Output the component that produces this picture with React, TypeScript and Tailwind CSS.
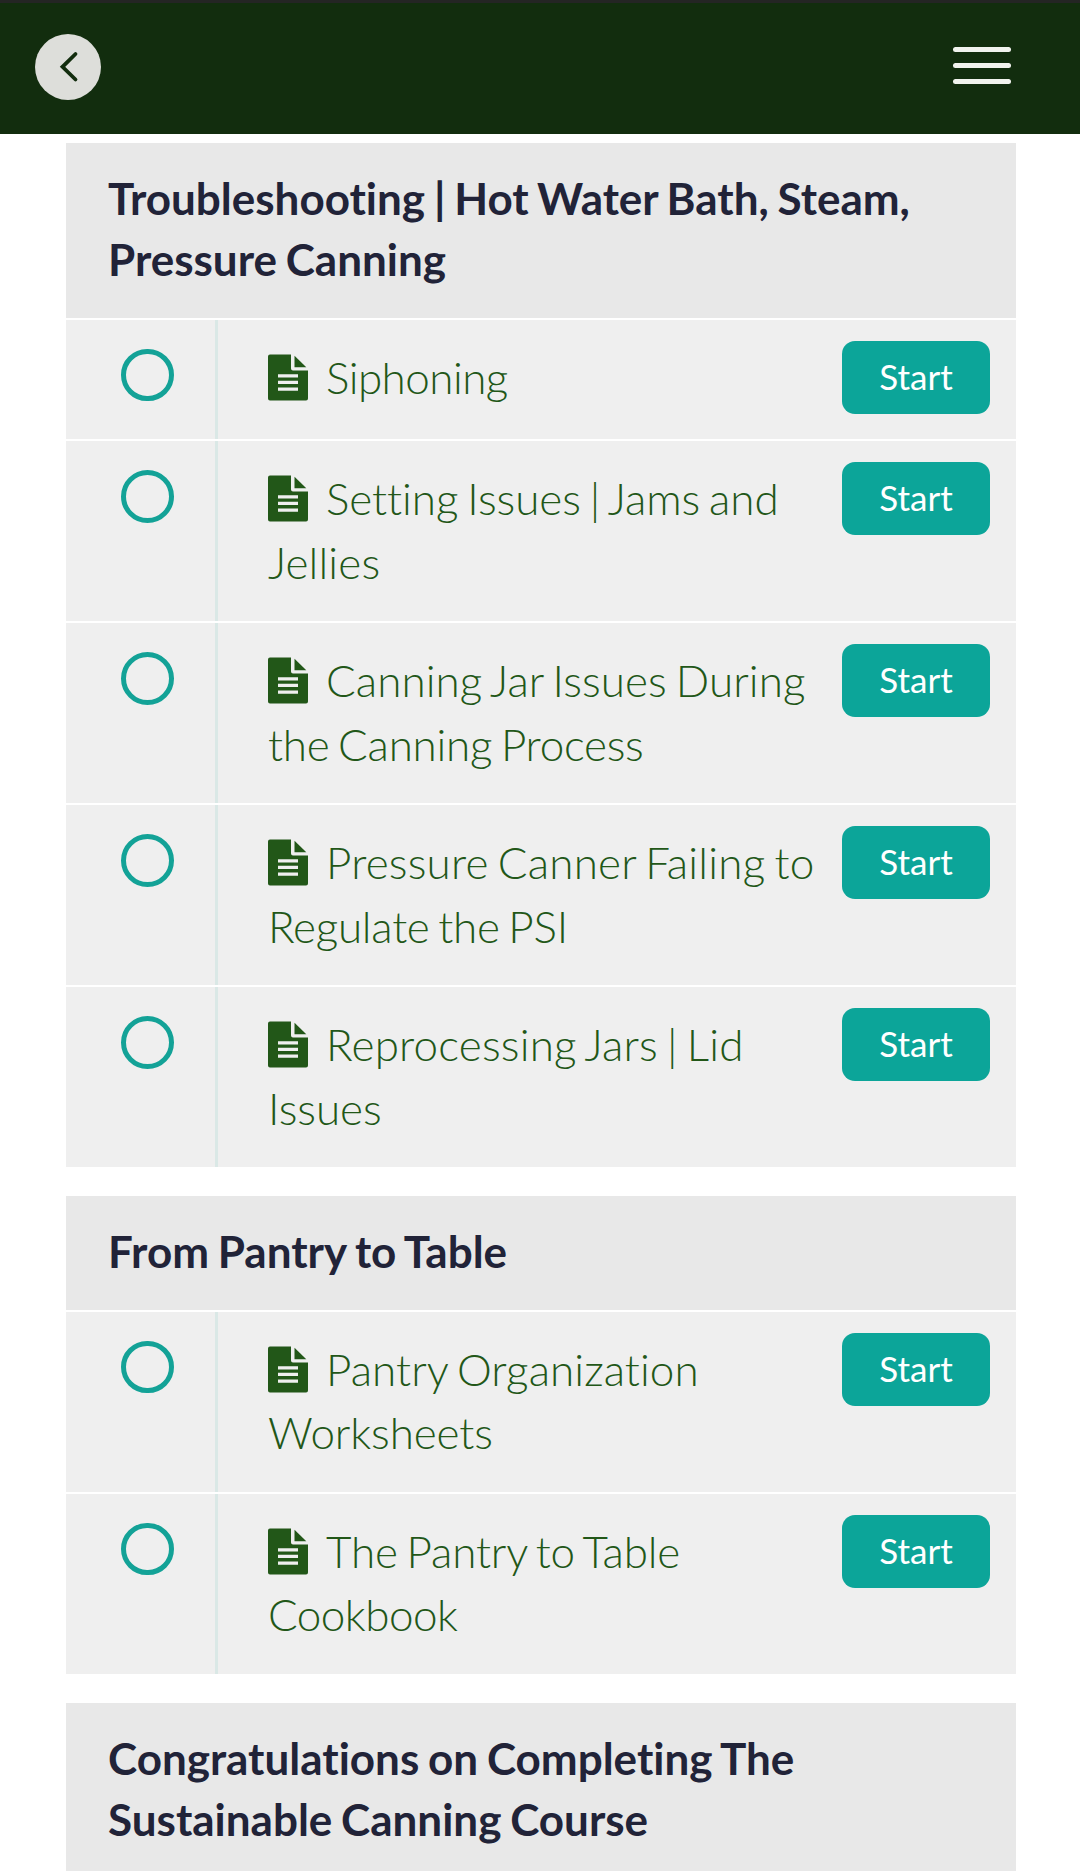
type Line = {
  text: string
  tracking: string
}

type Section = {
  title: string[]
  lessons: Line[][]
}

const sections: Section[] = [
  {
    title: ['Troubleshooting | Hot Water Bath, Steam,', 'Pressure Canning'],
    lessons: [
      [{ text: 'Siphoning', tracking: 'tracking-[-0.55px]' }],
      [
        { text: 'Setting Issues | Jams and', tracking: 'tracking-[-0.06px]' },
        { text: 'Jellies', tracking: 'tracking-[0.15px]' },
      ],
      [
        { text: 'Canning Jar Issues During', tracking: 'tracking-[0.07px]' },
        { text: 'the Canning Process', tracking: 'tracking-[-0.26px]' },
      ],
      [
        { text: 'Pressure Canner Failing to', tracking: 'tracking-[0.2px]' },
        { text: 'Regulate the PSI', tracking: 'tracking-[-0.26px]' },
      ],
      [
        { text: 'Reprocessing Jars | Lid', tracking: 'tracking-[0.18px]' },
        { text: 'Issues', tracking: 'tracking-[-0.05px]' },
      ],
    ],
  },
  {
    title: ['From Pantry to Table'],
    lessons: [
      [
        { text: 'Pantry Organization', tracking: 'tracking-[0.07px]' },
        { text: 'Worksheets', tracking: 'tracking-[-0.13px]' },
      ],
      [
        { text: 'The Pantry to Table', tracking: 'tracking-[-0.17px]' },
        { text: 'Cookbook', tracking: 'tracking-[-0.54px]' },
      ],
    ],
  },
  {
    title: ['Congratulations on Completing The', 'Sustainable Canning Course'],
    lessons: [],
  },
]

function DocumentIcon() {
  return (
    <svg className="mr-[18px] inline-block h-[47px] w-10 align-[-7px]" viewBox="0 0 40 47" aria-hidden="true">
      <path
        d="M2 0.5H23V14.5Q23 16.5 25 16.5H40V44.5Q40 46.5 38 46.5H2Q0 46.5 0 44.5V2.5Q0 0.5 2 0.5ZM10 20.2V23.4H30V20.2ZM10 26.8V30H30V26.8ZM10 33.5V36.7H30V33.5Z"
        fill="#225718"
        fillRule="evenodd"
      />
      <path d="M26.5 1.8V13.2H38.3Z" fill="#225718" />
    </svg>
  )
}

function Header() {
  return (
    <header className="flex h-[134px] items-center justify-between border-t-3 border-[#242524] bg-[#122d0e] pr-[69px] pb-[3px] pl-[35px]">
      <button aria-label="Back" className="flex size-[66px] items-center justify-center rounded-full bg-[#dddeda]" type="button">
        <svg className="size-[66px]" fill="none" viewBox="0 0 66 66">
          <path d="M40.5 20L27.5 32.8L40.5 45.5" stroke="#122d0e" strokeLinecap="round" strokeWidth="3.8" />
        </svg>
      </button>
      <button aria-label="Menu" className="mb-[3px] flex w-[58px] flex-col gap-[11px]" type="button">
        <span className="h-[5px] rounded-sm bg-[#f1f3ee]" />
        <span className="h-[5px] rounded-sm bg-[#f1f3ee]" />
        <span className="h-[5px] rounded-sm bg-[#f1f3ee]" />
      </button>
    </header>
  )
}

function LessonRow({ lines }: { lines: Line[] }) {
  return (
    <li className="flex min-h-[119px] bg-[#efefef]">
      <div className="w-[152px] shrink-0 border-r-[3px] border-[#dae8e6] pt-[29px] pl-[55px]">
        <span className="block size-[52.5px] rounded-full border-[5.5px] border-[#13a297]" />
      </div>
      <a className="min-w-0 flex-1 pt-[26.2px] pb-[27px] pl-[50px] text-[44px] leading-[63.3px] font-light whitespace-nowrap text-[#225718] [word-spacing:-3px]">
        <DocumentIcon />
        {lines.map((line, index) => (
          <span className={line.tracking} key={line.text}>
            {line.text}
            {index < lines.length - 1 ? <br /> : null}
          </span>
        ))}
      </a>
      <button className="mt-[20.8px] mr-[26px] h-[73.5px] w-[148px] shrink-0 rounded-[13px] bg-[#0ca599] pb-[2.5px] text-[35px] leading-none text-white" type="button">
        Start
      </button>
    </li>
  )
}

export default function App() {
  return (
    <div className="h-[1871px] w-[1080px] overflow-hidden bg-white font-['Lato',sans-serif] [font-variant-ligatures:none]">
      <Header />
      <main className="mt-[9px] mr-16 ml-[66px] flex flex-col gap-[29px]">
        {sections.map((section) => (
          <section key={section.title[0]}>
            <h2 className="bg-[#e8e8e8] pt-[25px] pb-[27.7px] pl-[42px] text-[44px] leading-[61px] font-bold whitespace-nowrap text-[#212338] [word-spacing:-1.9px]">
              {section.title.map((line) => (
                <span className="block" key={line}>
                  {line}
                </span>
              ))}
            </h2>
            <ul className="mt-[2.3px] flex flex-col gap-[2.2px]">
              {section.lessons.map((lesson) => (
                <LessonRow key={lesson[0].text} lines={lesson} />
              ))}
            </ul>
          </section>
        ))}
      </main>
    </div>
  )
}
